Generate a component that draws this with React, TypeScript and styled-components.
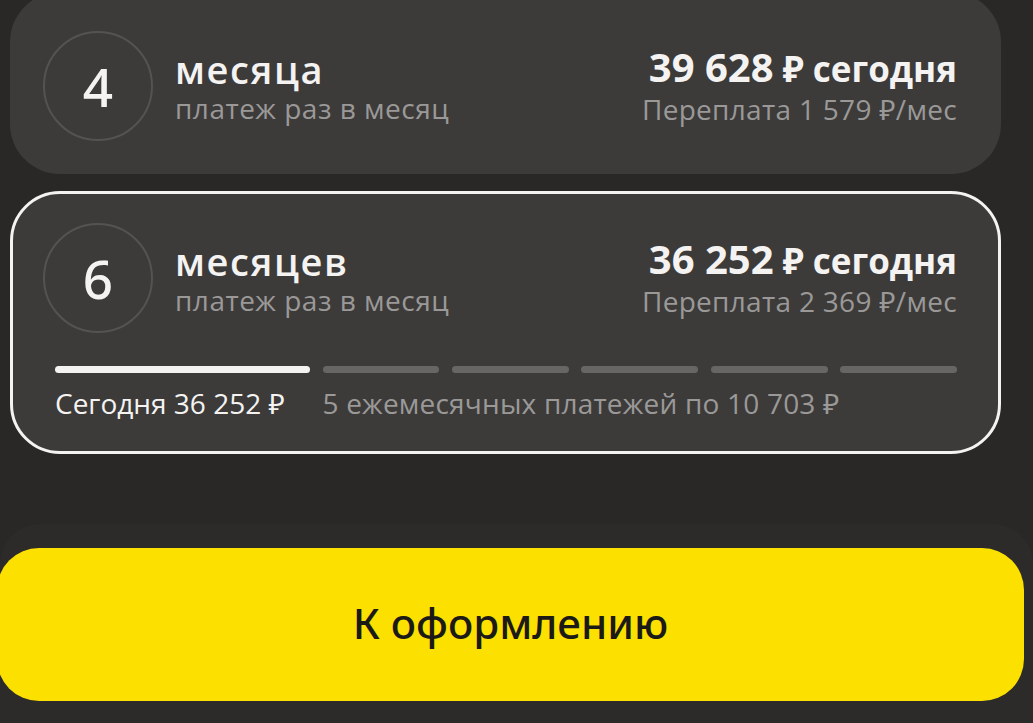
import * as React from "react";
import styled, { createGlobalStyle } from "styled-components";

type Plan = {
  months: number;
  label: string;
  today: string;
  overpay: string;
  selected?: boolean;
  firstPayment?: string;
  rest?: string;
};

const plans: Plan[] = [
  {
    months: 4,
    label: "месяца",
    today: "39 628",
    overpay: "1 579",
  },
  {
    months: 6,
    label: "месяцев",
    today: "36 252",
    overpay: "2 369",
    selected: true,
    firstPayment: "Сегодня 36 252 ₽",
    rest: "5 ежемесячных платежей по 10 703 ₽",
  },
];

export default function App() {
  return (
    <>
      <GlobalStyle />
      <Screen>
        <PlanList>
          {plans.map((p) => (
            <PlanCard key={p.months} $selected={!!p.selected}>
              <PlanHeader>
                <MonthsCircle>{p.months}</MonthsCircle>
                <PlanTitleBlock>
                  <PlanTitle>{p.label}</PlanTitle>
                  <PlanSubtitle>платеж раз в месяц</PlanSubtitle>
                </PlanTitleBlock>
                <PriceBlock>
                  <PriceLine>
                    <PriceNumber>{p.today}</PriceNumber> ₽ сегодня
                  </PriceLine>
                  <Overpay>Переплата {p.overpay} ₽/мес</Overpay>
                </PriceBlock>
              </PlanHeader>
              {p.selected && (
                <Schedule>
                  <Segment $active />
                  {Array.from({ length: p.months - 1 }).map((_, i) => (
                    <Segment key={i} />
                  ))}
                  <TodayText>{p.firstPayment}</TodayText>
                  <RestText>{p.rest}</RestText>
                </Schedule>
              )}
            </PlanCard>
          ))}
        </PlanList>
        <BottomPanel>
          <CheckoutButton>К оформлению</CheckoutButton>
        </BottomPanel>
      </Screen>
    </>
  );
}

const GlobalStyle = createGlobalStyle`
  html, body {
    margin: 0;
    padding: 0;
    background: #292827;
    overflow: hidden;
  }
  body {
    font-family: "Open Sans", "Noto Sans", "DejaVu Sans", sans-serif;
    color: #f4f3f2;
  }
`;

const Screen = styled.div`
  width: 1033px;
  height: 723px;
  display: flex;
  flex-direction: column;
  overflow: hidden;
`;

const PlanList = styled.div`
  display: flex;
  flex-direction: column;
  gap: 17px;
  padding: 0 32px 0 10px;
  margin-top: -8px;
`;

const PlanCard = styled.div<{ $selected: boolean }>`
  background: #3c3b3a;
  border-radius: 50px;
  border: 3px solid ${(p) => (p.$selected ? "#f4f3f2" : "transparent")};
  padding: ${(p) => (p.$selected ? "29px 41px 31px 30px" : "36px 41px 30px 30px")};
`;

const PlanHeader = styled.div`
  display: flex;
  align-items: center;
  gap: 22px;
`;

const MonthsCircle = styled.div`
  width: 106px;
  height: 106px;
  flex: none;
  border: 2px solid #545352;
  border-radius: 50%;
  display: flex;
  align-items: center;
  justify-content: center;
  font-family: "Noto Sans", "Open Sans", sans-serif;
  font-size: 53px;
  font-weight: 500;
  color: #f4f3f2;
`;

const PlanTitleBlock = styled.div`
  display: flex;
  flex-direction: column;
  padding-top: 2px;
`;

const PlanTitle = styled.div`
  font-size: 38px;
  font-weight: 600;
  line-height: 42px;
  letter-spacing: 1.6px;
`;

const PlanSubtitle = styled.div`
  font-size: 28px;
  line-height: 36px;
  letter-spacing: 0.5px;
  color: #9a9998;
`;

const PriceBlock = styled.div`
  margin-left: auto;
  display: flex;
  flex-direction: column;
  align-items: flex-end;
`;

const PriceLine = styled.div`
  font-size: 35px;
  font-weight: 700;
  line-height: 44px;
`;

const PriceNumber = styled.span`
  font-size: 40px;
`;

const Overpay = styled.div`
  font-size: 28px;
  line-height: 36px;
  letter-spacing: 0.3px;
  color: #9a9998;
`;

const Schedule = styled.div`
  display: grid;
  grid-template-columns: 255px repeat(5, 1fr);
  column-gap: 12.5px;
  row-gap: 13px;
  margin-top: 33px;
  padding-left: 12px;
`;

const Segment = styled.div<{ $active?: boolean }>`
  height: 7px;
  border-radius: 4px;
  background: ${(p) => (p.$active ? "#f4f3f2" : "#676665")};
`;

const TodayText = styled.div`
  font-size: 28px;
  line-height: 34px;
  color: #f4f3f2;
  white-space: nowrap;
`;

const RestText = styled.div`
  grid-column: 2 / -1;
  font-size: 28px;
  line-height: 34px;
  letter-spacing: 0.2px;
  color: #9a9998;
  white-space: nowrap;
`;

const BottomPanel = styled.div`
  margin-top: 70px;
  flex: 1;
  background: #2c2b2a;
  border-radius: 40px 40px 0 0;
  padding: 24px 9px 0 0;
`;

const CheckoutButton = styled.button`
  display: flex;
  align-items: center;
  justify-content: center;
  width: calc(100% + 3px);
  margin-left: -3px;
  height: 153px;
  border: none;
  border-radius: 42px;
  background: #fce000;
  color: #1b1a16;
  font-family: "Noto Sans", "Open Sans", sans-serif;
  font-size: 42px;
  font-weight: 500;
  padding: 0 0 4px;
`;
